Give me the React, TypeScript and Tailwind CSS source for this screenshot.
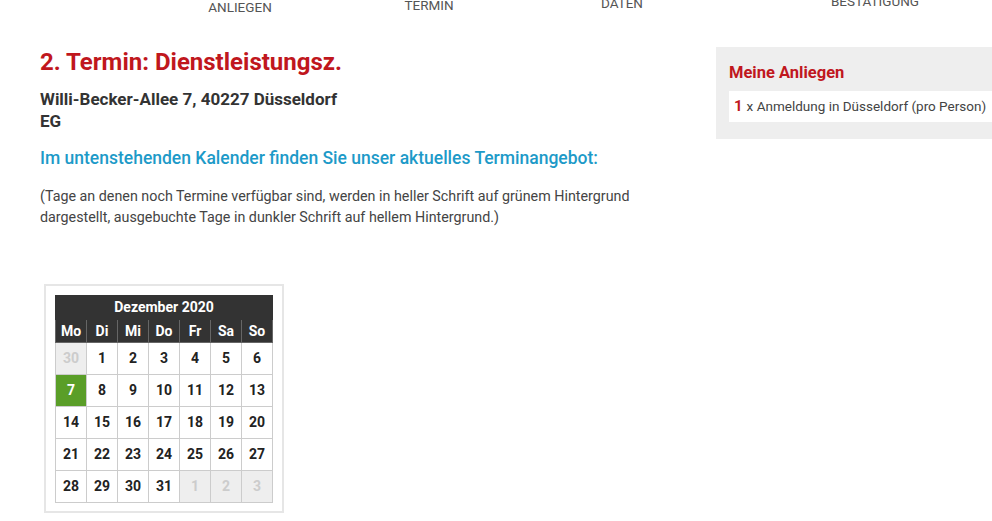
import React from 'react';

const FONT = "font-['Roboto','Liberation_Sans',sans-serif]";

const WEEKDAYS = ['Mo', 'Di', 'Mi', 'Do', 'Fr', 'Sa', 'So'];
const COL_W = ['w-[36px]', 'w-[29px]', 'w-[30px]', 'w-[32px]', 'w-[30px]', 'w-[31px]', 'w-[30px]'];

type Day = { n: number; kind: 'off' | 'free' | 'busy' };

const weeks: Day[][] = [
  [{ n: 30, kind: 'off' }, ...[1, 2, 3, 4, 5, 6].map((n) => ({ n, kind: 'busy' as const }))],
  [{ n: 7, kind: 'free' }, ...[8, 9, 10, 11, 12, 13].map((n) => ({ n, kind: 'busy' as const }))],
  [14, 15, 16, 17, 18, 19, 20].map((n) => ({ n, kind: 'busy' as const })),
  [21, 22, 23, 24, 25, 26, 27].map((n) => ({ n, kind: 'busy' as const })),
  [...[28, 29, 30, 31].map((n) => ({ n, kind: 'busy' as const })), ...[1, 2, 3].map((n) => ({ n, kind: 'off' as const }))],
];

function Calendar() {
  return (
    <div className="w-[240px] border-2 border-[#e6e6e6] p-[9px] pb-[8px]">
      <table className="border-collapse table-fixed w-[218px]">
        <thead>
          <tr>
            <th colSpan={7} className="h-[24px] bg-[#333333] text-white text-[14px] font-bold border border-[#333333]">
              Dezember 2020
            </th>
          </tr>
          <tr>
            {WEEKDAYS.map((d, i) => (
              <th key={d} className={`${COL_W[i]} h-[23px] bg-[#333333] text-white text-[14px] font-bold border border-[#666666]`}>
                {d}
              </th>
            ))}
          </tr>
        </thead>
        <tbody>
          {weeks.map((w, wi) => (
            <tr key={wi}>
              {w.map((d, di) => (
                <td
                  key={di}
                  className={`h-[32px] text-center text-[14px] font-bold border border-[#cccccc] ${
                    d.kind === 'off'
                      ? 'bg-[#eeeeee] text-[#cccccc]'
                      : d.kind === 'free'
                      ? 'bg-[#5a9e28] text-white'
                      : 'bg-white text-[#222222]'
                  }`}
                >
                  {d.n}
                </td>
              ))}
            </tr>
          ))}
        </tbody>
      </table>
    </div>
  );
}

export default function App() {
  return (
    <div className={`${FONT} w-[992px] h-[521px] overflow-hidden bg-white text-[#333333]`}>
      {/* Steps nav */}
      <div className="flex items-start h-[14px] pl-[150px] text-[13.5px] text-[#555555] leading-[14px] whitespace-nowrap">
        <div className="w-[180px] shrink-0 text-center mt-[0px]">ANLIEGEN</div>
        <div className="w-[198px] shrink-0 text-center -mt-[2px]">TERMIN</div>
        <div className="w-[188px] shrink-0 text-center -mt-[4px]">DATEN</div>
        <div className="w-[318px] shrink-0 text-center -mt-[6px]">BESTÄTIGUNG</div>
      </div>

      <div className="flex mt-[33px]">
        {/* Main column */}
        <div className="w-[676px] shrink-0 pl-[40px]">
          <h1 className="mt-[1px] text-[24px] font-bold text-[#c0171d] leading-[28px]">2. Termin: Dienstleistungsz.</h1>
          <div className="mt-[12px] text-[17px] font-bold text-[#333333] leading-[22px]">
            <div>Willi-Becker-Allee 7, 40227 Düsseldorf</div>
            <div>EG</div>
          </div>
          <h2 className="mt-[15px] text-[17.5px] font-medium text-[#1d9ac8] leading-[22px]">
            Im untenstehenden Kalender finden Sie unser aktuelles Terminangebot:
          </h2>
          <p className="mt-[17px] text-[14.3px] text-[#444444] leading-[21px] w-[610px]">
            (Tage an denen noch Termine verfügbar sind, werden in heller Schrift auf grünem Hintergrund
            dargestellt, ausgebuchte Tage in dunkler Schrift auf hellem Hintergrund.)
          </p>
          <div className="mt-[56px] ml-[4px]">
            <Calendar />
          </div>
        </div>

        {/* Sidebar */}
        <div className="ml-[40px] mt-[0px] self-start w-[290px] shrink-0 bg-[#eeeeee] pl-[13px] pt-[16px] pb-[17px]">
          <div className="text-[16.5px] font-bold text-[#c0171d] leading-[20px]">Meine Anliegen</div>
          <div className="mt-[8px] bg-white h-[31px] flex items-center pl-[5px] text-[13.5px] text-[#444444] whitespace-nowrap">
            <span className="text-[#c0171d] font-bold text-[15px] mr-[4px]">1</span>
            x Anmeldung in Düsseldorf (pro Person)
          </div>
        </div>
      </div>
    </div>
  );
}
